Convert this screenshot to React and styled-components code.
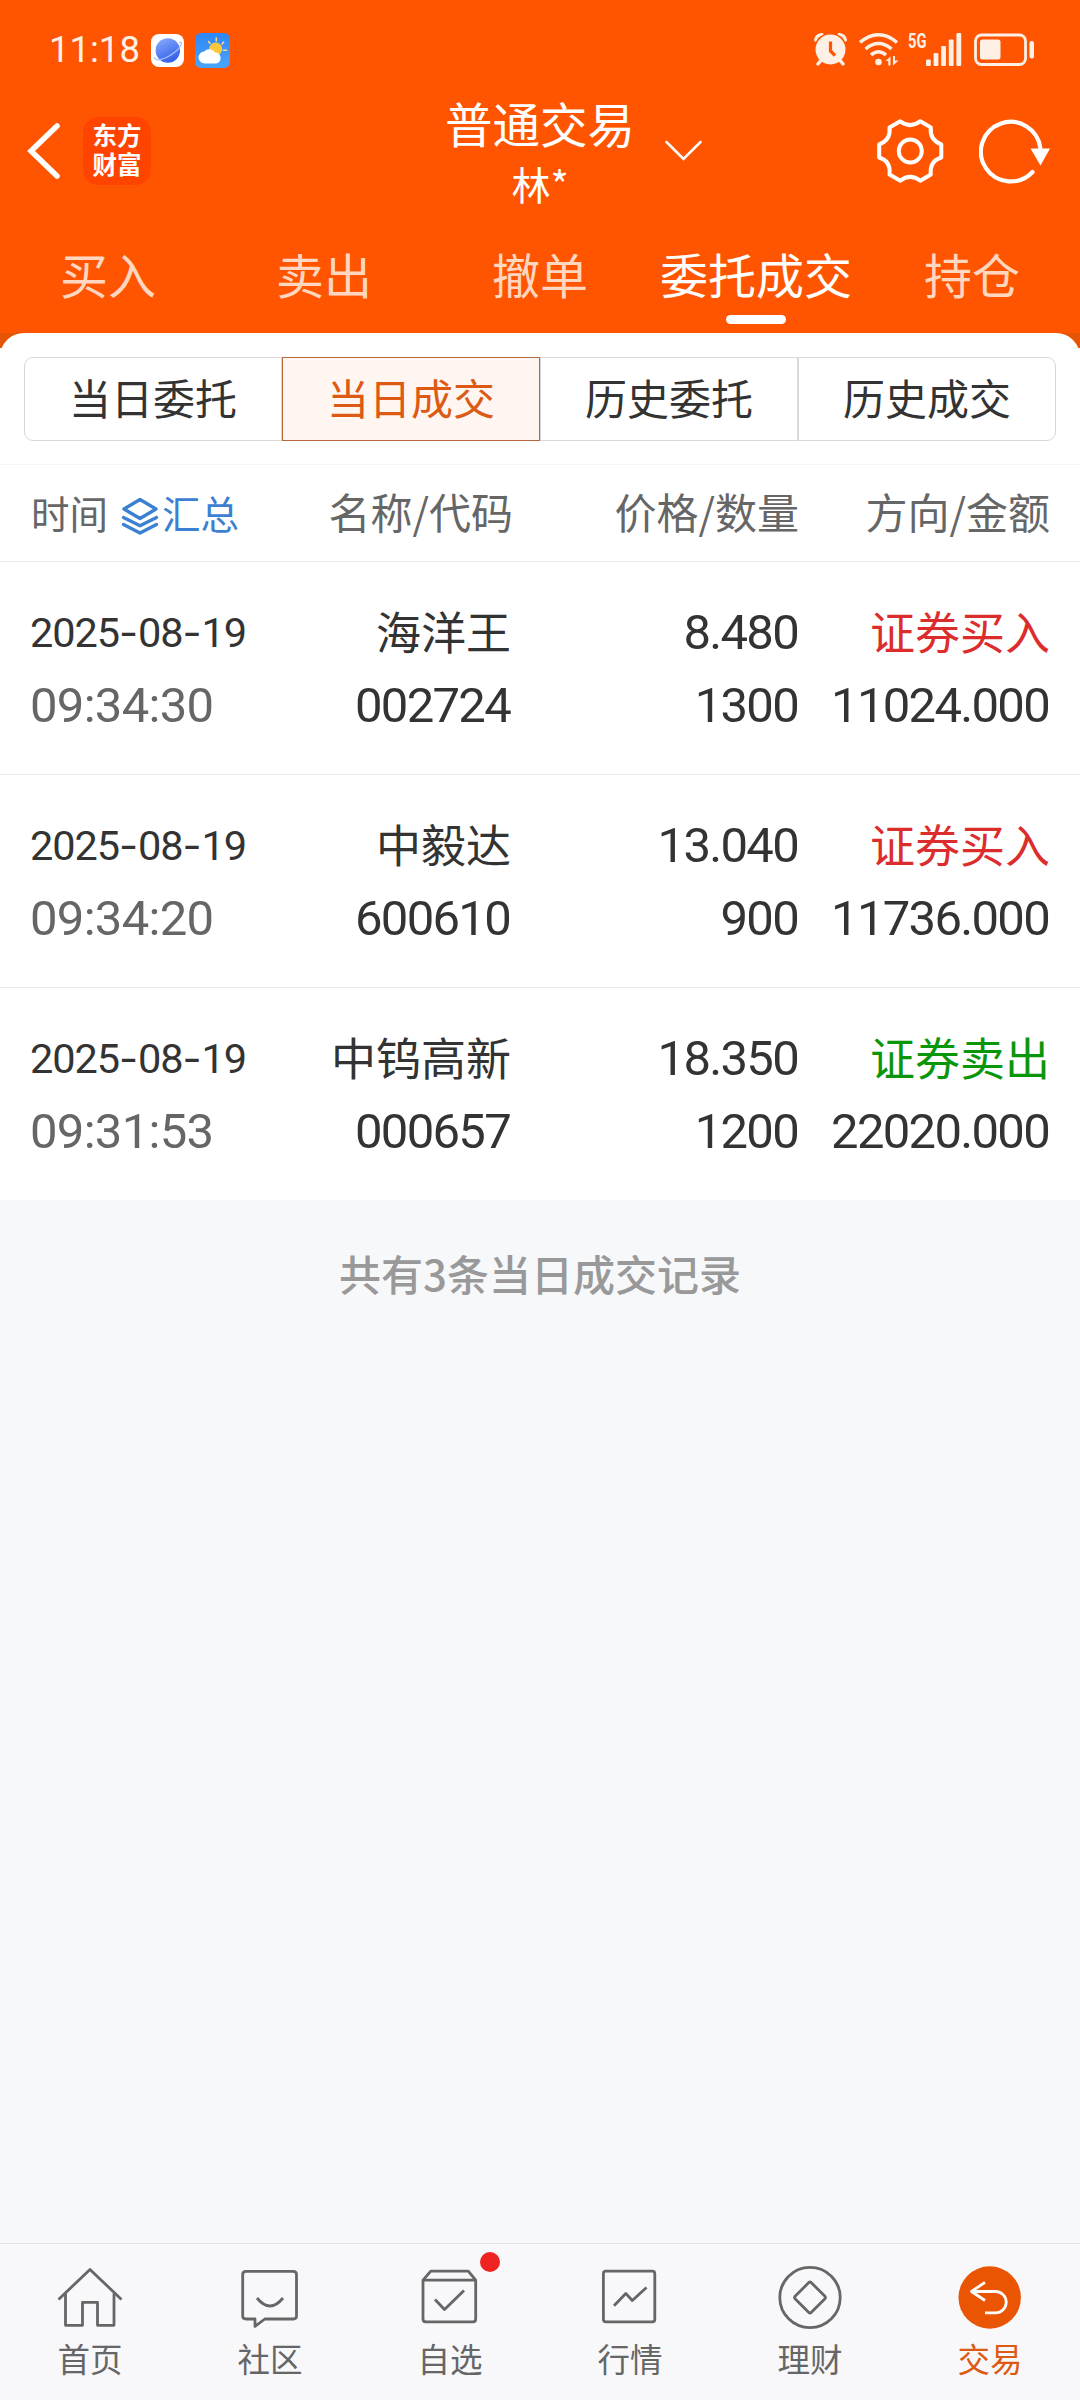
import React from "react";
import styled, { createGlobalStyle } from "styled-components";

const tabs = ["买入", "卖出", "撤单", "委托成交", "持仓"];
const segments = ["当日委托", "当日成交", "历史委托", "历史成交"];

const trades = [
  {
    date: "2025-08-19",
    time: "09:34:30",
    name: "海洋王",
    code: "002724",
    price: "8.480",
    count: "1300",
    side: "buy",
    amount: "11024.000",
  },
  {
    date: "2025-08-19",
    time: "09:34:20",
    name: "中毅达",
    code: "600610",
    price: "13.040",
    count: "900",
    side: "buy",
    amount: "11736.000",
  },
  {
    date: "2025-08-19",
    time: "09:31:53",
    name: "中钨高新",
    code: "000657",
    price: "18.350",
    count: "1200",
    side: "sell",
    amount: "22020.000",
  },
];

const navItems = [
  { label: "首页", icon: HomeIcon },
  { label: "社区", icon: CommunityIcon },
  { label: "自选", icon: WatchlistIcon, badge: true },
  { label: "行情", icon: MarketIcon },
  { label: "理财", icon: WealthIcon },
  { label: "交易", icon: TradeIcon, active: true },
];

export default function App() {
  return (
    <>
      <GlobalStyle />
      <Screen>
        <Header>
          <StatusBar />
          <TitleBar>
            <TitleLeft>
              <BackIcon />
              <BrandLogo>
                东方
                <br />
                财富
              </BrandLogo>
            </TitleLeft>
            <TitleText>
              <Title>普通交易</Title>
              <Account>林*</Account>
            </TitleText>
            <TitleRight>
              <ChevronIcon />
              <HeaderActions>
                <GearIcon />
                <RefreshIcon />
              </HeaderActions>
            </TitleRight>
          </TitleBar>
          <Tabs>
            {tabs.map((tab) => (
              <Tab key={tab} $active={tab === "委托成交"}>
                {tab}
              </Tab>
            ))}
          </Tabs>
        </Header>

        <PanelBackdrop>
          <Panel>
            <SegmentBar>
              {segments.map((item) => (
                <Segment key={item} $active={item === "当日成交"}>
                  {item}
                </Segment>
              ))}
            </SegmentBar>
            <TableHead>
              <TimeHead>
                时间
                <Summary>
                  <LayersIcon />
                  汇总
                </Summary>
              </TimeHead>
              <HeadCell>名称/代码</HeadCell>
              <HeadCell>价格/数量</HeadCell>
              <HeadCell>方向/金额</HeadCell>
            </TableHead>
            {trades.map((trade) => (
              <TradeRow key={trade.code}>
                <TimeCell>
                  <TradeDate value={trade.date} />
                  <TimeText>{trade.time}</TimeText>
                </TimeCell>
                <Cell>
                  <NameText>{trade.name}</NameText>
                  <NumberText>{trade.code}</NumberText>
                </Cell>
                <Cell>
                  <NumberText>{trade.price}</NumberText>
                  <NumberText>{trade.count}</NumberText>
                </Cell>
                <Cell>
                  <SideText $side={trade.side}>
                    {trade.side === "buy" ? "证券买入" : "证券卖出"}
                  </SideText>
                  <NumberText>{trade.amount}</NumberText>
                </Cell>
              </TradeRow>
            ))}
          </Panel>
        </PanelBackdrop>

        <RecordCount>共有{trades.length}条当日成交记录</RecordCount>

        <BottomNav>
          {navItems.map(({ label, icon: Icon, badge, active }) => (
            <NavItem key={label} $active={active}>
              <Icon />
              {badge && <Badge />}
              <NavLabel>{label}</NavLabel>
            </NavItem>
          ))}
        </BottomNav>
      </Screen>
    </>
  );
}

function StatusBar() {
  return (
    <StatusRow>
      <StatusGroup>
        <Clock>11:18</Clock>
        <BrowserAppIcon />
        <WeatherAppIcon />
      </StatusGroup>
      <StatusIcons>
        <AlarmIcon />
        <WifiIcon />
        <Signal>
          <NetworkType>5G</NetworkType>
          <SignalBars />
        </Signal>
        <BatteryIcon />
      </StatusIcons>
    </StatusRow>
  );
}

// The dashes are wider than the ones of the digit font
function TradeDate({ value }) {
  const [year, month, day] = value.split("-");
  return (
    <DateText>
      {year}
      <Dash>-</Dash>
      {month}
      <Dash>-</Dash>
      {day}
    </DateText>
  );
}

function BrowserAppIcon() {
  return (
    <svg width="33" height="33" viewBox="0 0 33 33">
      <defs>
        <linearGradient id="planet" x1="0.2" y1="0" x2="0.7" y2="1">
          <stop offset="0" stopColor="#86a9ff" />
          <stop offset="1" stopColor="#2f5be6" />
        </linearGradient>
      </defs>
      <rect width="33" height="33" rx="8" fill="#fff" />
      <circle cx="16.8" cy="16.5" r="12.2" fill="url(#planet)" />
      <path
        d="M28 8.500C33 7 30 13.500 22 19.500C13 26 3 28 3.500 23"
        fill="none"
        stroke="#a9c2fb"
        strokeWidth="1.300"
      />
    </svg>
  );
}

function WeatherAppIcon() {
  return (
    <svg width="35" height="35" viewBox="0 0 35 35">
      <defs>
        <linearGradient id="sky" x1="0" y1="0" x2="0" y2="1">
          <stop offset="0" stopColor="#2f86f5" />
          <stop offset="1" stopColor="#4aa5fb" />
        </linearGradient>
      </defs>
      <rect width="35" height="35" rx="6" fill="url(#sky)" />
      <g stroke="#ffd98a" strokeWidth="1.500" strokeLinecap="round">
        <path d="M21.300 5v3M13.500 8.500l1.500 2M28.700 9l-1.600 2M28.500 17.300h3" />
      </g>
      <circle cx="20.700" cy="16" r="6.500" fill="#ffc83c" />
      <path
        d="M10 30.500a6 6 0 0 1-.8-12A6.800 6.800 0 0 1 20 19.500a5.600 5.600 0 0 1 1.500 11z"
        fill="#fff"
      />
    </svg>
  );
}

function AlarmIcon() {
  return (
    <svg width="33" height="33" viewBox="0 0 33 33">
      <g fill="none" stroke="#fff0e6" strokeLinecap="round">
        <path d="M1.800 7A6 6 0 0 1 8 1.800M31.200 7A6 6 0 0 0 25 1.800" strokeWidth="3.500" />
      </g>
      <circle cx="16.500" cy="16.500" r="16.500" fill="#ff5500" />
      <path d="M8 26l-4 5M25 26l4 5" stroke="#fff0e6" strokeWidth="3.500" strokeLinecap="round" />
      <circle cx="16.500" cy="16.500" r="15" fill="#fff0e6" />
      <path
        d="M16.500 8.500v9.500l4.500 4.500"
        fill="none"
        stroke="#ff5500"
        strokeWidth="3.200"
      />
    </svg>
  );
}

function WifiIcon() {
  return (
    <svg width="40" height="33" viewBox="0 0 40 33">
      <g fill="none" stroke="#fff0e6" strokeWidth="3.500">
        <path d="M1 9.500Q19.500-6 38 9.500" />
        <path d="M6.500 16Q19.500 5 32.500 16" />
        <path d="M12 22Q19.500 15.500 27 22" />
      </g>
      <circle cx="19.500" cy="29" r="3.300" fill="#fff0e6" />
      <path d="M31.500 32.500v-9l-5 4.500h2.800v4.500zM34 23v9.500l5.500-5H36V23z" fill="#fff0e6" />
    </svg>
  );
}

function SignalBars() {
  return (
    <svg width="36" height="33" viewBox="0 0 36 33" fill="#fff0e6">
      <rect x="0" y="26.500" width="4.800" height="6.500" rx="1" />
      <rect x="7.600" y="20" width="4.800" height="13" rx="1" />
      <rect x="15.200" y="13" width="4.800" height="20" rx="1" />
      <rect x="22.800" y="6.500" width="4.800" height="26.500" rx="1" />
      <rect x="30.400" y="0" width="4.800" height="33" rx="1" />
    </svg>
  );
}

function BatteryIcon() {
  return (
    <svg width="60" height="33" viewBox="0 0 60 33">
      <rect
        x="1.500"
        y="2"
        width="50"
        height="29.500"
        rx="6"
        fill="none"
        stroke="#fff0e6"
        strokeWidth="2.800"
      />
      <rect x="6" y="6.500" width="20.500" height="20" rx="2.500" fill="#fff0e6" />
      <rect x="55.500" y="8" width="4.500" height="17.500" rx="2" fill="#fff0e6" />
    </svg>
  );
}

function BackIcon() {
  return (
    <svg width="33" height="56" viewBox="0 0 33 56">
      <path d="M30 3L4 28l26 25" fill="none" stroke="#fff" strokeWidth="5.500" strokeLinecap="round" />
    </svg>
  );
}

function ChevronIcon() {
  return (
    <svg width="37" height="22" viewBox="0 0 37 22">
      <path d="M1.500 2L18.500 19 35.500 2" fill="none" stroke="#fff" strokeWidth="2.500" strokeLinecap="round" />
    </svg>
  );
}

function GearIcon() {
  return (
    <svg width="67" height="66" viewBox="0 0 67 66">
      <g fill="none" stroke="#fff" strokeWidth="4" strokeLinejoin="round">
        <path d="M23.300 3.200Q33 11 43.300 3.200L53.800 9.400Q52.500 22 64.300 26.300V39.500Q52.500 43 53.800 56.500L43.300 62.700Q33 55 23.300 62.700L12.500 56.500Q14 43 2.200 39.500V26.300Q14 22 12.500 9.400Z" />
        <circle cx="33.300" cy="33" r="11.500" />
      </g>
    </svg>
  );
}

function RefreshIcon() {
  return (
    <svg width="72" height="66" viewBox="0 0 72 66">
      <path
        d="M61.300 30A29.800 29.800 0 1 0 53.500 54"
        fill="none"
        stroke="#fff"
        strokeWidth="4.200"
        strokeLinecap="round"
      />
      <path d="M51.500 30.500h19.500L61.500 47.500z" fill="#fff" />
    </svg>
  );
}

function LayersIcon() {
  return (
    <svg width="38" height="38" viewBox="0 0 38 38">
      <g fill="none" stroke="#3c80d2" strokeWidth="3.400" strokeLinejoin="round" strokeLinecap="round">
        <path d="M19 2.500L35 12 19 21.500 3 12z" />
        <path d="M2.500 20.500L19 28.800 35.500 20.500" />
        <path d="M2.500 27.500L19 36 35.500 27.500" />
      </g>
    </svg>
  );
}

function HomeIcon() {
  return (
    <NavSvg viewBox="0 0 66 66">
      <path d="M1.500 35.500L33 5.500 64.500 35.500" />
      <path d="M8.500 29.500V61.300H25.500V38.300H40.500V61.300H57V29.500" />
    </NavSvg>
  );
}

function CommunityIcon() {
  return (
    <NavSvg viewBox="0 0 66 66">
      <path d="M9 7.300H56.300Q59.500 7.300 59.500 10.500V52Q59.500 55 56.300 55H27.800L18 62.300V55H9Q5.700 55 5.700 52V10.500Q5.700 7.300 9 7.300Z" />
      <path d="M20 34Q33 50 46 34" />
    </NavSvg>
  );
}

function WatchlistIcon() {
  return (
    <NavSvg viewBox="0 0 66 66">
      <path d="M6 16.200L13.800 7.200H51.300L58.700 16.200V55Q58.700 57.800 56 57.800H8.800Q6 57.800 6 55ZM6 16.200H58.700" />
      <path d="M18 35.500L27.500 45.500 47 26.500" />
    </NavSvg>
  );
}

function MarketIcon() {
  return (
    <NavSvg viewBox="0 0 66 66">
      <rect x="6.400" y="7.200" width="51.400" height="50.600" rx="2.500" />
      <path d="M17 41.800L28.800 29.500 35.300 36.500 49.500 23.500" />
    </NavSvg>
  );
}

function WealthIcon() {
  return (
    <NavSvg viewBox="0 0 66 66">
      <circle cx="33" cy="33.500" r="30.200" />
      <rect x="21.600" y="22.100" width="22.800" height="22.800" rx="2" transform="rotate(45 33 33.500)" />
    </NavSvg>
  );
}

function TradeIcon() {
  return (
    <NavSvg viewBox="0 0 66 66">
      <circle cx="32.700" cy="33.500" r="31.200" fill="#ea5504" stroke="none" />
      <g stroke="#fff">
        <path d="M28 18.300L14.500 27.500 28 36.500" />
        <path d="M14.500 27.500H38.500A10.700 10.700 0 0 1 38.500 48.900H28" />
      </g>
    </NavSvg>
  );
}

const GlobalStyle = createGlobalStyle`
  * {
    box-sizing: border-box;
  }

  body {
    margin: 0;
    font-family: "Noto Sans CJK SC", sans-serif;
    color: #333;
  }

  svg {
    display: block;
    flex-shrink: 0;
  }
`;

const Screen = styled.div`
  display: flex;
  flex-direction: column;
  width: 1080px;
  height: 2400px;
  background: #f7f8fa;
  overflow: hidden;
`;

const Header = styled.header`
  background: #ff5500;
  color: #fff;
`;

const StatusRow = styled.div`
  display: flex;
  justify-content: space-between;
  height: 92px;
  padding: 33px 46px 0 49px;
  color: #fff0e6;
`;

const StatusGroup = styled.div`
  display: flex;
  align-items: center;
  height: 35px;
  gap: 11px;
`;

const Clock = styled.span`
  width: 91px;
  font-family: "Roboto", sans-serif;
  font-size: 36.5px;
  line-height: 33px;
  padding-bottom: 2px;
`;

const StatusIcons = styled.div`
  display: flex;
  height: 33px;
  gap: 12px;
`;

const Signal = styled.div`
  display: flex;
  margin-left: -3px;
`;

const NetworkType = styled.span`
  width: 18px;
  font-family: "Roboto", sans-serif;
  font-size: 21px;
  font-weight: 700;
  line-height: 16px;
  transform: scaleX(0.7);
  transform-origin: left;
`;

const TitleBar = styled.div`
  display: grid;
  grid-template-columns: 1fr 192px 1fr;
  align-items: center;
  height: 121px;
`;

const TitleLeft = styled.div`
  display: flex;
  align-items: center;
  gap: 23px;
  padding: 0 0 3px 27px;
`;

const BrandLogo = styled.div`
  width: 68px;
  height: 68px;
  padding-top: 3px;
  border-radius: 15px;
  background: #ff4400;
  font-size: 24.5px;
  font-weight: 700;
  line-height: 29px;
  text-align: center;
`;

const TitleText = styled.div`
  text-align: center;
  line-height: 60px;
`;

const Title = styled.div`
  font-size: 47.5px;
`;

const Account = styled.div`
  font-size: 39px;
`;

const TitleRight = styled.div`
  display: flex;
  align-items: center;
  justify-content: space-between;
  padding: 0 29px 3px;
`;

const HeaderActions = styled.div`
  display: flex;
  gap: 35px;
`;

const Tabs = styled.div`
  display: grid;
  grid-template-columns: repeat(5, 1fr);
  height: 120px;
  padding-top: 30px;
`;

const Tab = styled.div`
  display: flex;
  flex-direction: column;
  align-items: center;
  font-size: 48px;
  line-height: 60px;
  white-space: nowrap;
  color: ${(props) => (props.$active ? "#fff" : "#ffd6bf")};

  &::after {
    content: "";
    width: 60px;
    height: 9px;
    margin-top: 12px;
    border-radius: 5px;
    background: ${(props) => (props.$active ? "#fff" : "transparent")};
  }
`;

const PanelBackdrop = styled.div`
  background: linear-gradient(#e65503 15px, #fff 15px);
`;

const Panel = styled.main`
  padding-top: 24px;
  border-radius: 24px 24px 0 0;
  background: #fff;
`;

const SegmentBar = styled.div`
  display: grid;
  grid-template-columns: repeat(4, 1fr);
  height: 108px;
  padding: 0 24px 23px;
  border-bottom: 1px solid #f5f5f5;
`;

const Segment = styled.div`
  border: 1px solid ${(props) => (props.$active ? "#b4693c" : "#d8d8d8")};
  background: ${(props) => (props.$active ? "#fff5f1" : "#fff")};
  color: ${(props) => (props.$active ? "#dc5a14" : "#333")};
  font-size: 42px;
  line-height: 78px;
  text-align: center;

  &:first-child {
    border-radius: 9px 0 0 9px;
  }

  &:last-child {
    border-radius: 0 9px 9px 0;
  }
`;

const TableHead = styled.div`
  display: grid;
  grid-template-columns: 270px 213px 286px 251px;
  align-items: center;
  height: 97px;
  padding: 0 30px 6px;
  border-bottom: 1px solid #ebebeb;
  color: #666;
`;

const TimeHead = styled.div`
  display: flex;
  align-items: center;
  font-size: 38.5px;
  padding: 4px 0 0 1px;
`;

const Summary = styled.span`
  display: flex;
  align-items: center;
  gap: 3px;
  margin-left: 13px;
  color: #3c80d2;

  svg {
    margin-top: 8px;
  }
`;

const HeadCell = styled.div`
  font-size: 42px;
  text-align: right;
`;

const TradeRow = styled.div`
  display: grid;
  grid-template-columns: 270px 211px 288px 251px;
  height: 213px;
  padding: 31px 30px 0;
  border-bottom: 1px solid #ebebeb;
  white-space: nowrap;

  &:last-child {
    height: 212px;
    border-bottom: 0;
  }
`;

const Cell = styled.div`
  display: flex;
  flex-direction: column;
  align-items: flex-end;
`;

const TimeCell = styled(Cell)`
  align-items: flex-start;
`;

const NameText = styled.div`
  height: 73px;
  font-size: 45px;
  line-height: 75px;
`;

const SideText = styled(NameText)`
  color: ${(props) => (props.$side === "buy" ? "#dc2d2d" : "#0a960a")};
`;

const NumberText = styled.div`
  height: 73px;
  padding-right: 1px;
  font-family: "Roboto", sans-serif;
  font-size: 49px;
  line-height: 79px;
  letter-spacing: -1.7px;
  color: #333;
`;

const TimeText = styled(NumberText)`
  color: #666;
  letter-spacing: -0.7px;
`;

const DateText = styled(NumberText)`
  font-size: 41.5px;
  letter-spacing: -1.1px;
`;

const Dash = styled.span`
  font-family: "Inter", sans-serif;
  letter-spacing: 0;
`;

const RecordCount = styled.div`
  margin-top: 42px;
  font-size: 42px;
  font-weight: 500;
  line-height: 62px;
  text-align: center;
  color: #999;
`;

const BottomNav = styled.nav`
  display: grid;
  grid-template-columns: repeat(6, 1fr);
  height: 157px;
  margin-top: auto;
  padding-top: 20px;
  border-top: 1px solid #e0e0e2;
  background: #f8f8fb;
`;

const NavItem = styled.div`
  position: relative;
  display: flex;
  flex-direction: column;
  align-items: center;
  color: ${(props) => (props.$active ? "#dc5a14" : "#666")};
`;

const NavSvg = styled.svg`
  width: 66px;
  height: 66px;
  fill: none;
  stroke: #666;
  stroke-width: 2.8;
  stroke-linejoin: round;
`;

const NavLabel = styled.span`
  margin-top: 6px;
  font-size: 32.5px;
  line-height: 44px;
`;

const Badge = styled.span`
  position: absolute;
  top: -12px;
  left: 120px;
  width: 20px;
  height: 20px;
  border-radius: 50%;
  background: #f02323;
`;
